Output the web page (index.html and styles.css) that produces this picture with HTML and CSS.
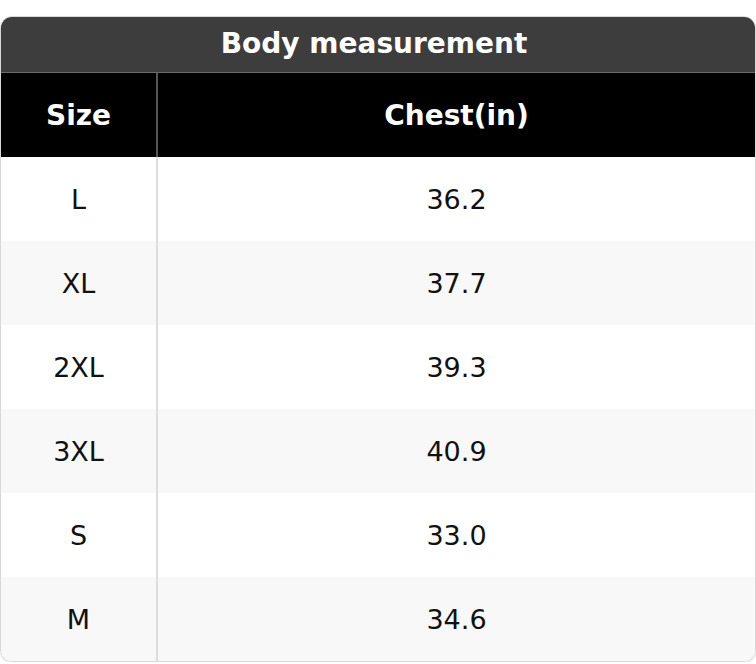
FILE: index.html
```html
<!DOCTYPE html>
<html>
<head>
<meta charset="utf-8">
<link rel="stylesheet" href="styles.css">
</head>
<body>
<div class="card">
  <div class="title">Body measurement</div>
  <div class="grid">
    <div class="cell head first">Size</div>
    <div class="cell head">Chest(in)</div>
    <div class="cell first">L</div><div class="cell">36.2</div>
    <div class="cell first alt">XL</div><div class="cell alt">37.7</div>
    <div class="cell first">2XL</div><div class="cell">39.3</div>
    <div class="cell first alt">3XL</div><div class="cell alt">40.9</div>
    <div class="cell first">S</div><div class="cell">33.0</div>
    <div class="cell first alt">M</div><div class="cell alt">34.6</div>
  </div>
</div>
</body>
</html>
```
FILE: styles.css
```css
html, body {
  margin: 0;
  padding: 0;
  background: #ffffff;
}
body {
  padding-top: 16px;
  font-family: "DejaVu Sans", Verdana, sans-serif;
}
.card {
  box-sizing: border-box;
  width: 756px;
  border: 1px solid #d8d8d8;
  border-radius: 12px;
  overflow: hidden;
  box-shadow: 0 1px 2px rgba(0, 0, 0, 0.12);
}
.title {
  box-sizing: border-box;
  height: 57px;
  margin: -1px -1px 0 -1px;
  padding: 0 8px 2px 0;
  background: #3d3d3d;
  color: #ffffff;
  font-weight: bold;
  font-size: 28px;
  display: flex;
  align-items: center;
  justify-content: center;
  border-bottom: 1px solid #6a6a6a;
}
.grid {
  display: grid;
  grid-template-columns: 157px 1fr;
}
.cell {
  height: 84px;
  display: flex;
  align-items: center;
  justify-content: center;
  font-size: 27px;
  color: #111111;
  background: #ffffff;
}
.cell.alt {
  background: #f8f8f8;
}
.cell.first {
  border-right: 2px solid #dddddd;
}
.cell.head {
  background: #000000;
  color: #ffffff;
  font-weight: bold;
  font-size: 28px;
}
.cell.head.first {
  border-right-color: #555555;
}
```
